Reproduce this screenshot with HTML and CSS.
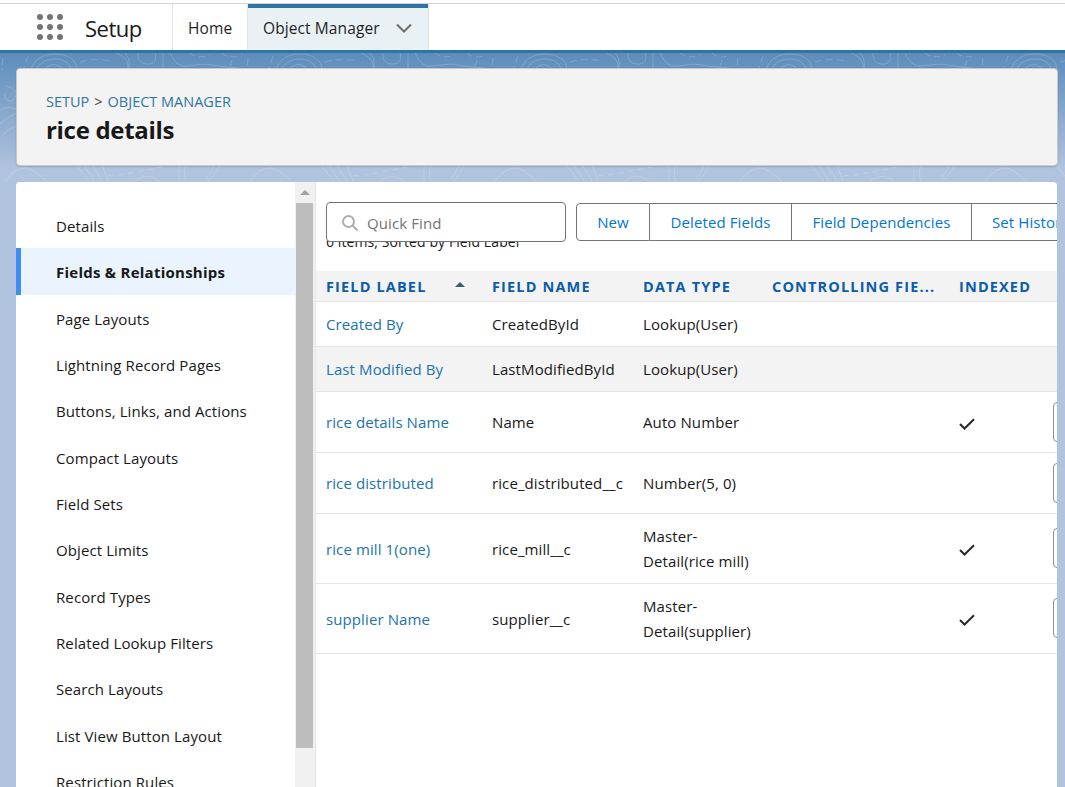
FILE: index.html
```html
<!DOCTYPE html>
<html lang="en">
<head>
  <meta charset="UTF-8">
  <title>rice details | Object Manager</title>
  <link rel="stylesheet" href="styles.css">
</head>
<body>

<svg class="topo" width="1065" height="190">
  <defs>
    <pattern id="contours" width="245" height="190" patternUnits="userSpaceOnUse">
      <g fill="none" stroke="#fff" stroke-opacity=".18">
        <path d="M30 74c2-14 12-20 25-20s22 6 22 16M36 72c2-9 10-13 19-13s15 4 16 11M46 68c3-4 12-5 16 1"/>
        <path d="M3 58l-1 12M28 56l-4 12M80 62c10-3 22-3 32-1" stroke-dasharray="7 4"/>
        <path d="M116 53c10 4 14 10 11 17M125 53c4 4 5 10 4 16"/>
        <path d="M138 53c-1 8 4 11 10 11s9-4 7-11M163 53v16"/>
        <path d="M170 53c4 8 8 13 14 13 10 0 18-3 28-1s20 2 33 4"/>
        <path d="M190 53c4 4 12 5 20 2M222 53c5 5 12 5 18 2M232 60l-3 10" stroke-dasharray="6 4"/>
        <path d="M6 86c8 2 12 6 9 12s-12 2-10-4M0 110c6-3 12-3 16-1M0 124c6-6 12-9 16-10M2 136c4-5 9-8 14-10"/>
        <path d="M5 181c6-7 12-13 20-13s14 8 22 13M76 165l13 16M84 165l10 16M92 165l10 16M102 165l6 16"/>
        <path d="M108 176c18-1 36-6 54-9" stroke-dasharray="6 4"/>
        <path d="M135 181c8-6 16-6 24 0M179 165v16M186 165c-2 6-2 11 0 16"/>
        <path d="M220 165c-3 6-7 12-12 16M214 165c-2 5-4 9-8 14"/>
      </g>
    </pattern>
  </defs>
  <rect width="1065" height="190" fill="url(#contours)"/>
</svg>

<header class="topbar">
  <div class="app-launcher">
    <svg class="waffle" width="26" height="26" viewBox="0 0 26 26" fill="#747474">
      <circle cx="3" cy="3" r="3"/><circle cx="13" cy="3" r="3"/><circle cx="23" cy="3" r="3"/>
      <circle cx="3" cy="13" r="3"/><circle cx="13" cy="13" r="3"/><circle cx="23" cy="13" r="3"/>
      <circle cx="3" cy="23" r="3"/><circle cx="13" cy="23" r="3"/><circle cx="23" cy="23" r="3"/>
    </svg>
    <span class="app-name">Setup</span>
  </div>
  <nav class="tabs">
    <a class="tab tab-home">Home</a>
    <a class="tab tab-active">Object Manager
      <svg class="tab-chevron" width="16" height="10" viewBox="0 0 16 10" fill="none" stroke="#706e6b" stroke-width="2"><path d="M1 1.5l7 7 7-7"/></svg>
    </a>
  </nav>
</header>

<main class="page">
  <section class="page-header">
    <div class="crumbs"><a>SETUP</a><span class="crumb-sep">&gt;</span><a>OBJECT MANAGER</a></div>
    <h1>rice details</h1>
  </section>

  <section class="workspace">
    <aside class="sidebar">
      <ul class="side-list">
        <li>Details</li>
        <li class="side-active">Fields &amp; Relationships</li>
        <li>Page Layouts</li>
        <li>Lightning Record Pages</li>
        <li>Buttons, Links, and Actions</li>
        <li>Compact Layouts</li>
        <li>Field Sets</li>
        <li>Object Limits</li>
        <li>Record Types</li>
        <li>Related Lookup Filters</li>
        <li>Search Layouts</li>
        <li>List View Button Layout</li>
        <li>Restriction Rules</li>
      </ul>
    </aside>
    <div class="scrollbar">
      <div class="scroll-up"></div>
      <div class="scroll-thumb"></div>
    </div>

    <div class="content">
      <div class="toolbar">
        <div class="search">
          <svg width="18" height="18" viewBox="0 0 18 18" fill="none" stroke="#b0adab" stroke-width="2"><circle cx="7.5" cy="7.5" r="5.5"/><path d="M11.5 11.5l5 5"/></svg>
          <span>Quick Find</span>
        </div>
        <div class="btn-group">
          <a class="btn btn-new">New</a>
          <a class="btn btn-deleted">Deleted Fields</a>
          <a class="btn btn-deps">Field Dependencies</a>
          <a class="btn btn-history">Set History Tracking</a>
        </div>
      </div>
      <p class="status">6 items, Sorted by Field Label</p>

      <table class="fields">
        <colgroup>
          <col class="c-label"><col class="c-name"><col class="c-type"><col class="c-ctrl"><col class="c-index"><col class="c-act">
        </colgroup>
        <thead>
          <tr>
            <th><span class="th-sort">FIELD LABEL<i class="sort-up"></i></span></th>
            <th>FIELD NAME</th>
            <th>DATA TYPE</th>
            <th>CONTROLLING FIE...</th>
            <th>INDEXED</th>
            <th></th>
          </tr>
        </thead>
        <tbody>
          <tr class="row-a">
            <td><a>Created By</a></td><td>CreatedById</td><td>Lookup(User)</td><td></td><td></td><td></td>
          </tr>
          <tr class="row-a row-hover">
            <td><a>Last Modified By</a></td><td>LastModifiedById</td><td>Lookup(User)</td><td></td><td></td><td></td>
          </tr>
          <tr class="row-b">
            <td><a>rice details Name</a></td><td>Name</td><td>Auto Number</td><td></td>
            <td><svg class="check" width="16" height="12" viewBox="0 0 16 12" fill="none" stroke="#2b2826" stroke-width="2"><path d="M1 6l4.5 4.5L15 1.2"/></svg></td>
            <td class="cell-menu"><span class="row-menu"></span></td>
          </tr>
          <tr class="row-b">
            <td><a>rice distributed</a></td><td>rice_distributed__c</td><td>Number(5, 0)</td><td></td><td></td>
            <td class="cell-menu"><span class="row-menu"></span></td>
          </tr>
          <tr class="row-c">
            <td><a>rice mill 1(one)</a></td><td>rice_mill__c</td><td>Master-Detail(rice mill)</td><td></td>
            <td><svg class="check" width="16" height="12" viewBox="0 0 16 12" fill="none" stroke="#2b2826" stroke-width="2"><path d="M1 6l4.5 4.5L15 1.2"/></svg></td>
            <td class="cell-menu"><span class="row-menu"></span></td>
          </tr>
          <tr class="row-c">
            <td><a>supplier Name</a></td><td>supplier__c</td><td>Master-Detail(supplier)</td><td></td>
            <td><svg class="check" width="16" height="12" viewBox="0 0 16 12" fill="none" stroke="#2b2826" stroke-width="2"><path d="M1 6l4.5 4.5L15 1.2"/></svg></td>
            <td class="cell-menu"><span class="row-menu"></span></td>
          </tr>
        </tbody>
      </table>
    </div>
  </section>
</main>

</body>
</html>
```

FILE: styles.css
```css
* {
  box-sizing: border-box;
}

html,
body {
  height: 100%;
}

body {
  margin: 0;
  overflow: hidden;
  position: relative;
  display: flex;
  flex-direction: column;
  font-family: "Open Sans", "Noto Sans", Arial, sans-serif;
  font-size: 15px;
  letter-spacing: 0.1px;
  color: #181818;
  background: linear-gradient(#5d8cbc 53px, #b0c4df 170px);
}

.topo {
  position: absolute;
  top: 0;
  left: 0;
}

.topbar {
  position: relative;
  flex: none;
  height: 53px;
  padding-top: 4px;
  display: flex;
  background-color: #fff;
  border-bottom: 3px solid #2e76a2;
}

.topbar::before {
  content: "";
  position: absolute;
  top: 3px;
  left: 0;
  right: 0;
  height: 1px;
  background-color: #d0d0d0;
}

.app-launcher {
  width: 172px;
  display: flex;
  align-items: center;
  padding-left: 37px;
}

.waffle {
  flex: none;
}

.app-name {
  margin-left: 22px;
  padding-top: 2px;
  font-size: 22px;
  letter-spacing: -0.5px;
}

.tabs {
  display: flex;
}

.tab {
  display: flex;
  align-items: center;
  padding: 2px 15px 0;
  color: #1f1f1f;
  font-size: 15.5px;
  border-left: 1px solid #e5e5e5;
}

.tab-home {
  width: 75px;
}

.tab-active {
  position: relative;
  width: 182px;
  gap: 16px;
  white-space: nowrap;
  background-color: #eaf1f5;
  border-right: 1px solid #dfe5e8;
}

.tab-active::before {
  content: "";
  position: absolute;
  top: 0;
  left: 0;
  right: 0;
  height: 4px;
  background-color: #2e76a2;
}

.page {
  position: relative;
  flex: 1;
  min-height: 0;
  padding: 15px 8px 0 16px;
  display: flex;
  flex-direction: column;
  gap: 16px;
}

.page-header {
  flex: none;
  height: 98px;
  margin-right: -1px;
  padding: 23px 29px 0;
  background-color: #f3f3f3;
  border: 1px solid #c9c9c9;
  border-radius: 4px;
  box-shadow: 0 1px 2px rgba(0, 0, 0, 0.15);
}

.crumbs {
  display: flex;
  gap: 5px;
  margin-bottom: 1px;
  font-size: 14.5px;
  line-height: 20px;
  letter-spacing: 0;
  color: #2e76a2;
}

.crumb-sep {
  color: #444;
}

h1 {
  margin: 0;
  font-size: 24px;
  line-height: 33px;
  font-weight: 700;
  letter-spacing: -0.3px;
}

.workspace {
  flex: 1;
  min-height: 0;
  display: flex;
  overflow: hidden;
  background-color: #fff;
  border-radius: 4px 4px 0 0;
}

.sidebar {
  flex: none;
  width: 279px;
  padding-top: 20px;
  overflow: hidden;
}

.side-list {
  margin: 0;
  padding: 0;
  list-style: none;
}

.side-list li {
  height: 46.33px;
  padding-left: 40px;
  line-height: 48px;
  white-space: nowrap;
}

.side-list .side-active {
  padding-left: 35px;
  font-weight: 700;
  letter-spacing: 0.25px;
  background-color: #eaf4fe;
  border-left: 5px solid #3d8df5;
}

.scrollbar {
  flex: none;
  width: 21px;
  padding: 0 2px 0 1px;
  background-color: #f1f1f1;
  border-right: 1px solid #e5e5e5;
}

.scroll-up {
  height: 21px;
  display: flex;
  justify-content: center;
  align-items: center;
}

.scroll-up::before {
  content: "";
  border-left: 5px solid transparent;
  border-right: 5px solid transparent;
  border-bottom: 5px solid #a3a3a3;
}

.scroll-thumb {
  height: 545px;
  background-color: #bdbdbd;
}

.content {
  flex: 1;
  min-width: 0;
  overflow: hidden;
  padding-top: 20px;
}

.toolbar {
  position: relative;
  display: flex;
  align-items: center;
  gap: 10px;
  height: 40px;
  padding-left: 10px;
  width: 900px;
}

.search {
  flex: none;
  width: 240px;
  height: 40px;
  display: flex;
  align-items: center;
  gap: 8px;
  padding: 2px 0 0 14px;
  color: #747474;
  background-color: #fff;
  border: 1px solid #747474;
  border-radius: 4px;
}

.btn-group {
  display: flex;
  height: 38px;
  flex: none;
}

.btn {
  display: flex;
  align-items: center;
  justify-content: center;
  white-space: nowrap;
  color: #0176d3;
  background-color: #fff;
  border: 1px solid #747474;
  border-left: none;
}

.btn-new {
  width: 74px;
  border-left: 1px solid #747474;
  border-radius: 4px 0 0 4px;
}

.btn-deleted {
  width: 142px;
}

.btn-deps {
  width: 180px;
}

.btn-history {
  width: 170px;
  justify-content: flex-start;
  padding-left: 20px;
  border-radius: 0 4px 4px 0;
}

.status {
  margin: -6px 0 0 10px;
  height: 35px;
  line-height: 12px;
  font-size: 14px;
}

.fields {
  table-layout: fixed;
  width: 741px;
  border-collapse: collapse;
}

.c-label { width: 166px; }
.c-name { width: 151px; }
.c-type { width: 129px; }
.c-ctrl { width: 187px; }
.c-index { width: 94px; }
.c-act { width: 14px; }

.fields th {
  height: 30px;
  padding: 1px 10px 0;
  text-align: left;
  white-space: nowrap;
  font-size: 14.5px;
  font-weight: 700;
  letter-spacing: 1.15px;
  color: #0b5cab;
  background-color: #f3f3f3;
  border-bottom: 1px solid #e5e5e5;
}

.th-sort {
  position: relative;
  display: block;
}

.sort-up {
  position: absolute;
  top: 5px;
  left: 129px;
  border-left: 5px solid transparent;
  border-right: 5px solid transparent;
  border-bottom: 5px solid #3e5c7a;
}

.fields td {
  padding: 2px 10px 0;
  border-bottom: 1px solid #e5e5e5;
  line-height: 25px;
}

.fields td a {
  color: #2074aa;
}

.fields .cell-menu {
  padding-top: 0;
}

.row-a td { height: 45px; }
.row-b td { height: 61px; }
.row-c td { height: 70px; }

.row-hover td {
  background-color: #f3f3f3;
}

.check {
  display: block;
  margin-top: 2px;
}

.row-menu {
  display: block;
  width: 32px;
  height: 40px;
  background-color: #fff;
  border: 1px solid #919191;
  border-radius: 4px;
}
```
